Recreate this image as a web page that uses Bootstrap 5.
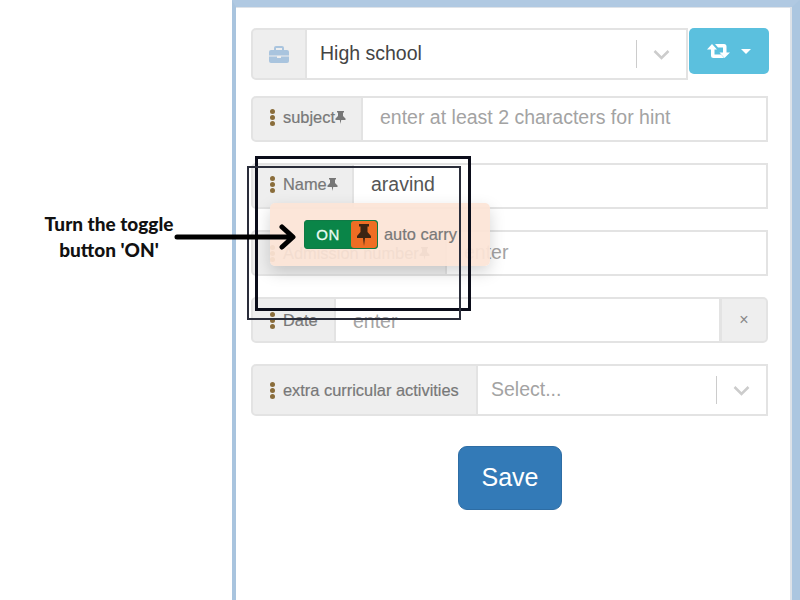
<!DOCTYPE html>
<html lang="en">
<head>
<meta charset="utf-8">
<title>Form</title>
<link rel="stylesheet" href="https://cdn.jsdelivr.net/npm/bootstrap@5.3.0/dist/css/bootstrap.min.css">
<style>
html,body{height:600px;overflow:hidden;background:#fff;}
body{font-family:"Liberation Sans",Arial,sans-serif;color:#555;position:relative;}
.stage{display:flex;height:600px;}
.caption{width:232px;flex:none;}
.sheet{width:568px;flex:none;height:600px;border-left:4px solid #a9c4de;border-top:7px solid #b0c9e2;border-right:8px solid #abc6e0;padding:21px 24px 0 15px;box-shadow:inset -2px 0 0 #dde2e8,inset 0 1px 0 #dde2e8;}
.fld{display:flex;height:46px;margin-bottom:21px;width:517px;}
.fld.tall{height:52px;}
.fld-top{display:flex;align-items:flex-start;gap:1px;margin-bottom:16px;margin-right:-1px;}
.fld-top .fld{width:437px;margin:0;flex:none;}
.addon{background:#eee;border:2px solid #e3e3e3;border-right-width:1px;border-radius:5px 0 0 5px;display:flex;align-items:center;flex:none;padding-left:17px;font-size:16.400px;color:#787878;-webkit-text-stroke:.2px #787878;white-space:nowrap;}
.addon.lift{padding-bottom:3px;}
.box{flex:1;min-width:0;background:#fff;border:2px solid #e3e3e3;border-left-width:1px;display:flex;align-items:center;font-size:19.500px;padding:0 0 0 17px;color:#555;}
.box.lift{padding-bottom:2px;}
.box.drop{padding-top:3px;}
.box.ph{color:#a3a3a3;}
.box.pick{padding-left:13px;}
.box.dark{color:#444;}
.dots{display:flex;flex-direction:column;gap:1px;margin-right:8px;}
.dots i{display:block;width:5px;height:5px;border-radius:50%;background:#8a6d3b;}
.tail{margin-left:auto;display:flex;align-items:center;height:100%;}
.sep{width:1px;height:28px;background:#ccc;}
.chev{margin:0 16px 0 16px;display:block;}
.swapbtn{width:80px;height:46px;background:#5bc0de;border:0;border-radius:5px;display:flex;align-items:center;justify-content:center;gap:11px;padding:0;flex:none;}
.caret-d{width:0;height:0;border-left:5px solid transparent;border-right:5px solid transparent;border-top:5px solid #fff;}
.clr{width:47px;flex:none;background:#eee;border:2px solid #e3e3e3;border-left-width:1px;border-radius:0 5px 5px 0;display:flex;align-items:center;justify-content:center;color:#888;font-size:16px;}
.savebtn{display:block;width:104px;height:64px;margin:30px 0 0 207px;background:#337ab7;color:#fff;border:1px solid #2e6da4;border-radius:9px;font-size:25px;padding:0;}
.w-a{width:111px}.w-b{width:102px}.w-c{width:195px}.w-d{width:84px}.w-e{width:226px}.w-f{width:55px;padding:0;justify-content:center;}
.pop{position:absolute;left:270px;top:203px;width:220px;height:63px;background:rgba(252,228,214,.93);border-radius:5px;box-shadow:0 6px 16px rgba(0,0,0,.17);display:flex;align-items:center;padding:0 0 0 34px;gap:6px;color:#787878;-webkit-text-stroke:.2px #787878;font-size:16.400px;white-space:nowrap;}
.tog{display:flex;width:74px;height:29px;background:#0a8548;border:1px solid #0f7a45;border-radius:3px;overflow:hidden;}
.tog-on{flex:1;color:#e8fbf3;-webkit-text-stroke:.3px #e8fbf3;text-align:center;line-height:27px;font-size:15px;letter-spacing:.6px;}
.tog-pin{width:26px;background:#ee6d24;border-radius:3px;display:flex;align-items:center;justify-content:center;}
.rect1{position:absolute;left:255px;top:156px;width:216px;height:155px;border:3px solid #0b0d1a;pointer-events:none;}
.rect2{position:absolute;left:247px;top:166px;width:214px;height:154px;border:2px solid #2a2d3a;pointer-events:none;}
.note{position:absolute;left:20px;top:211px;width:178px;text-align:center;font-family:"Lato",sans-serif;font-weight:900;font-size:19px;line-height:26px;color:#111;}
.arrow{position:absolute;left:174px;top:224px;}
</style>
</head>
<body>
<div class="stage">
  <div class="caption"></div>
  <div class="sheet">
    <div class="fld-top">
      <div class="fld tall">
        <div class="addon w-f"><svg width="20" height="17" viewBox="0 0 20 17"><path fill="#a9c4de" d="M7 0h6a2 2 0 0 1 2 2v2h3a2 2 0 0 1 2 2v3.500H0V6a2 2 0 0 1 2-2h3V2a2 2 0 0 1 2-2zm0 2v2h6V2H7zM0 10.500h8V12h4v-1.500h8V15a2 2 0 0 1-2 2H2a2 2 0 0 1-2-2z"/></svg></div>
        <div class="box pick dark">High school<div class="tail"><span class="sep"></span><svg class="chev" width="17" height="11" viewBox="0 0 17 11"><path d="M1.500 2l7 7 7-7" fill="none" stroke="#ccc" stroke-width="2.500"/></svg></div></div>
      </div>
      <button class="swapbtn" type="button" aria-label="Swap"><svg width="23" height="14" viewBox="0 0 23 14"><path fill="#fff" d="M5 0l5 5.500H7.500v5h6.500l3 3.500H6.500A2.500 2.500 0 0 1 4 11.500V5.500H0zM8 0h9a2.500 2.500 0 0 1 2.500 2.500v6H23L17.500 14l-5-5.500H16v-5h-5z"/></svg><span class="caret-d"></span></button>
    </div>
    <div class="fld">
      <div class="addon lift w-a"><span class="dots"><i></i><i></i><i></i></span>subject<svg width="11" height="13" viewBox="0 0 11 13"><path fill="#777" d="M2 0h7v1.500H8V5l2.500 2.500V9H6.200L5.500 13l-.7-4H.5V7.500L3 5V1.500H2z"/></svg></div>
      <div class="box lift ph">enter at least 2 characters for hint</div>
    </div>
    <div class="fld">
      <div class="addon lift w-b"><span class="dots"><i></i><i></i><i></i></span>Name<svg width="11" height="13" viewBox="0 0 11 13"><path fill="#777" d="M2 0h7v1.500H8V5l2.500 2.500V9H6.200L5.500 13l-.7-4H.5V7.500L3 5V1.500H2z"/></svg></div>
      <div class="box lift">aravind</div>
    </div>
    <div class="fld">
      <div class="addon w-c"><span class="dots"><i></i><i></i><i></i></span>Admission number<svg width="11" height="13" viewBox="0 0 11 13"><path fill="#777" d="M2 0h7v1.500H8V5l2.500 2.500V9H6.200L5.500 13l-.7-4H.5V7.500L3 5V1.500H2z"/></svg></div>
      <div class="box ph">enter</div>
    </div>
    <div class="fld">
      <div class="addon w-d"><span class="dots"><i></i><i></i><i></i></span>Date</div>
      <div class="box ph drop">enter</div>
      <div class="clr">×</div>
    </div>
    <div class="fld tall mb-0">
      <div class="addon w-e"><span class="dots"><i></i><i></i><i></i></span>extra curricular activities</div>
      <div class="box ph pick">Select...<div class="tail"><span class="sep"></span><svg class="chev" width="17" height="11" viewBox="0 0 17 11"><path d="M1.500 2l7 7 7-7" fill="none" stroke="#ccc" stroke-width="2.500"/></svg></div></div>
    </div>
    <button class="savebtn" type="button">Save</button>
  </div>
</div>
<div class="pop">
  <div class="tog"><span class="tog-on">ON</span><span class="tog-pin"><svg width="16" height="22" viewBox="0 0 16 22"><path fill="#3b2413" d="M3 0h10v2.500h-1.500V8l3.500 4v2H9l-1 8-1-8H1v-2l3.500-4V2.500H3z"/></svg></span></div>
  <span>auto carry</span>
</div>
<div class="rect1"></div>
<div class="rect2"></div>
<div class="note">Turn the toggle<br>button 'ON'</div>
<svg class="arrow" width="124" height="26" viewBox="0 0 124 26"><path d="M3 13h115M108 3l11 10-11 10" fill="none" stroke="#000" stroke-width="5" stroke-linecap="round" stroke-linejoin="round"/></svg>
<script src="https://cdn.jsdelivr.net/npm/bootstrap@5.3.0/dist/js/bootstrap.bundle.min.js"></script>
</body>
</html>
